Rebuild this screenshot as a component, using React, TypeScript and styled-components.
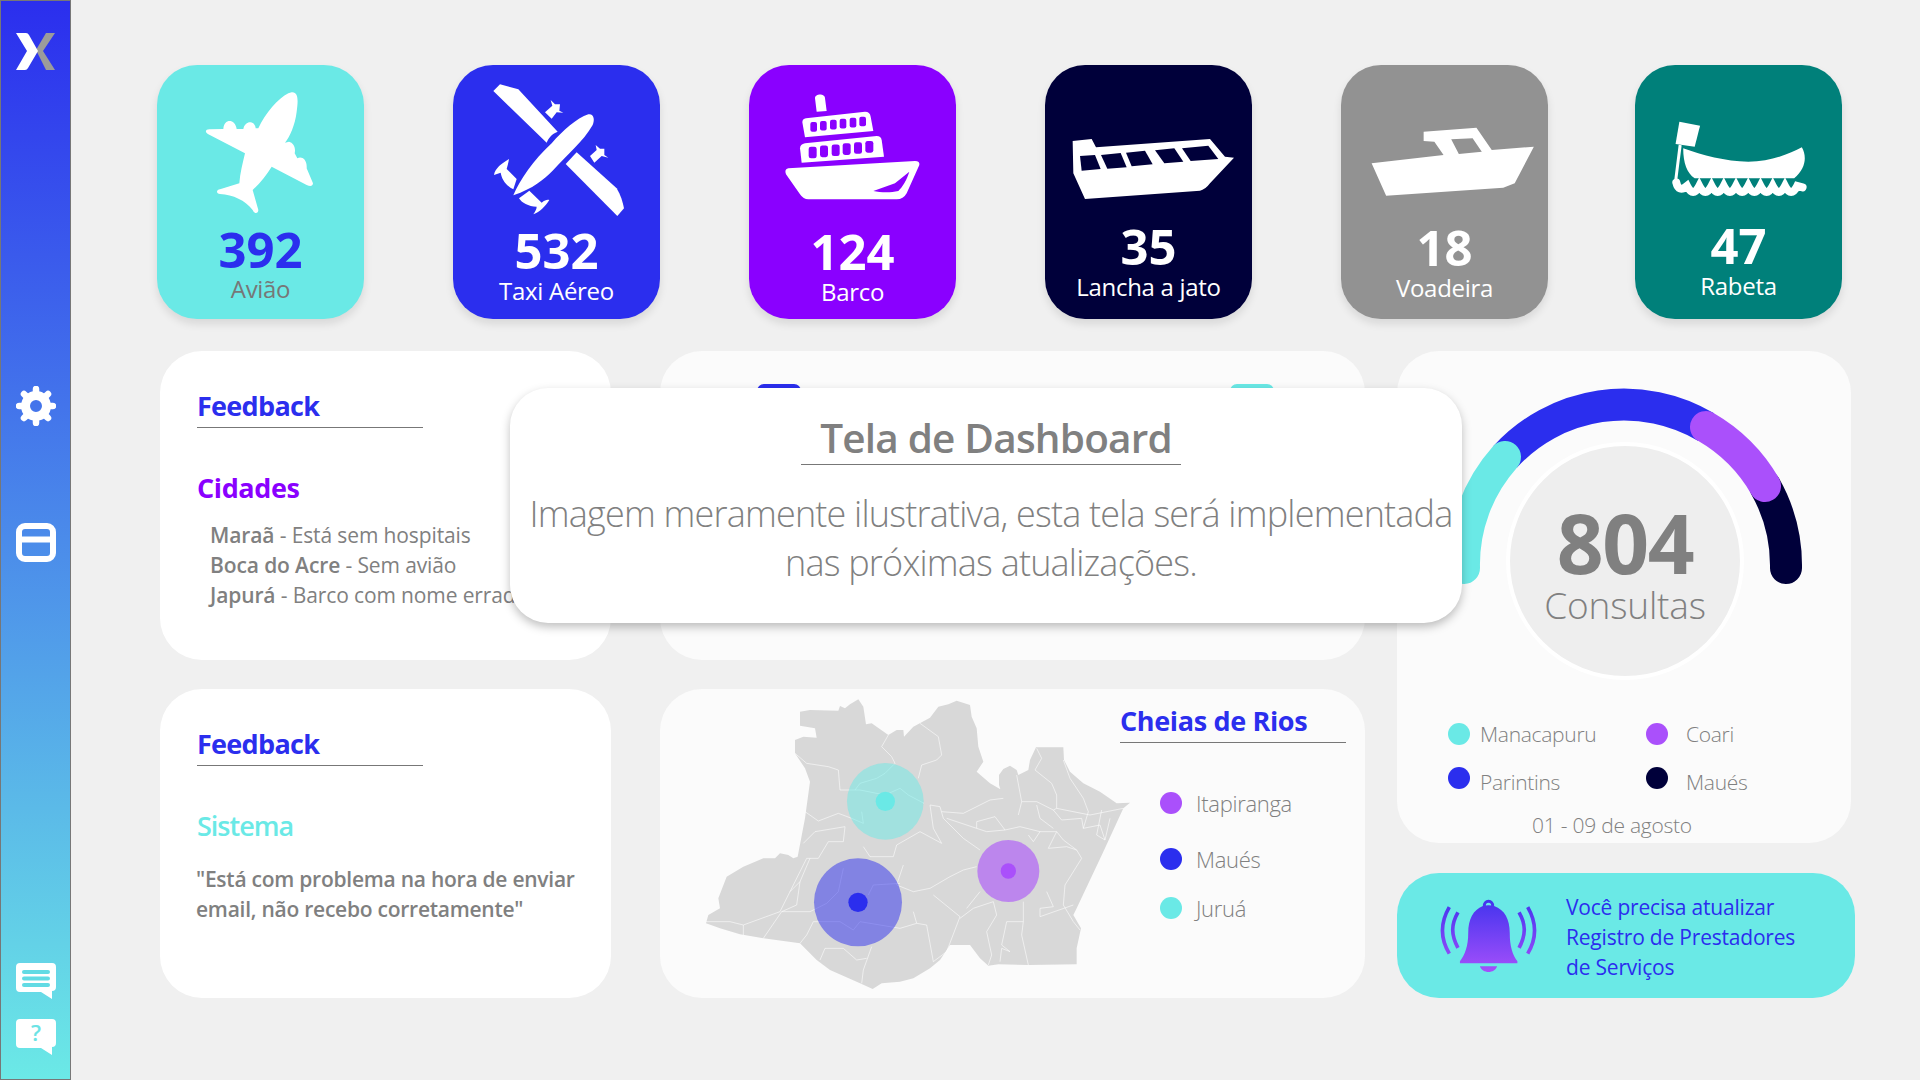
import styled, { createGlobalStyle } from 'styled-components'

const teal = '#6ae9e6'
const blue = '#2b2eee'
const violet = '#aa50fb'
const purple = '#8a00ff'
const navy = '#00003a'
const gray = '#808080'

const GlobalStyle = createGlobalStyle`
 html, body {
  margin: 0;
  padding: 0;
  background: #f0f0f0;
  font-family: "Open Sans", "Noto Sans", sans-serif;
 }
 * { box-sizing: border-box; }
`

const Page = styled.div`
 position: relative;
 display: flex;
 width: 1920px;
 height: 1080px;
 overflow: hidden;
 background: #f0f0f0;
`

const Sidebar = styled.aside`
 width: 71px;
 height: 1080px;
 flex-shrink: 0;
 display: flex;
 flex-direction: column;
 align-items: center;
 padding: 31px 0 21px;
 border: 1px solid #777;
 background: linear-gradient(180deg, #2b2eee 0%, #6be9e6 100%);
`

const SideIcon = styled.svg<{ $top?: number; $auto?: boolean }>`
 width: 40px;
 height: 40px;
 flex-shrink: 0;
 margin-top: ${p => (p.$auto ? 'auto' : `${p.$top ?? 0}px`)};
`

const Main = styled.main`
 flex: 1;
 padding: 65px 0 0 86px;
`

const TopRow = styled.section`
 display: flex;
 gap: 89px;
`

const StatCard = styled.div<{ $bg: string; $nudge?: number }>`
 width: 207px;
 height: 254px;
 flex-shrink: 0;
 margin-left: ${p => p.$nudge ?? 0}px;
 border-radius: 40px;
 background: ${p => p.$bg};
 box-shadow: 0 5px 8px rgba(0, 0, 0, 0.1);
 display: flex;
 flex-direction: column;
 align-items: center;
`

const StatIcon = styled.svg`
 width: 207px;
 height: 160px;
 flex-shrink: 0;
`

const StatNumber = styled.div<{ $top: number; $color?: string }>`
 margin-top: ${p => p.$top}px;
 font-size: 49px;
 line-height: 40px;
 font-weight: 700;
 color: ${p => p.$color ?? '#fff'};
`

const StatLabel = styled.div<{ $top: number; $color?: string }>`
 margin-top: ${p => p.$top}px;
 font-size: 24px;
 line-height: 24px;
 letter-spacing: -0.3px;
 color: ${p => p.$color ?? '#fff'};
`

const Board = styled.section`
 display: grid;
 grid-template-columns: 451px 705px 458px;
 column-gap: 49px;
 margin: 32px 0 0 3px;
`

const Column = styled.div<{ $gap: number; $shift?: number }>`
 display: flex;
 flex-direction: column;
 gap: ${p => p.$gap}px;
 margin-left: ${p => p.$shift ?? 0}px;
`

const Panel = styled.div<{ $soft?: boolean }>`
 height: 309px;
 border-radius: 42px;
 background: ${p => (p.$soft ? '#fbfbfb' : '#fff')};
`

const FeedbackPanel = styled(Panel)`
 padding: 32px 24px 0 37px;
`

const SectionTitle = styled.h2<{ $spacing: number }>`
 width: 226px;
 margin: 0;
 height: 45px;
 border-bottom: 1px solid #777;
 font-size: 27px;
 line-height: 46px;
 font-weight: 700;
 letter-spacing: ${p => p.$spacing}px;
 white-space: nowrap;
 color: ${blue};
`

const Topic = styled.h3<{ $color: string; $weight: number; $spacing: number }>`
 margin: 42px 0 0;
 font-size: 27px;
 line-height: 36px;
 font-weight: ${p => p.$weight};
 letter-spacing: ${p => p.$spacing}px;
 color: ${p => p.$color};
`

const IssueList = styled.div`
 margin: 14px 0 0 13px;
 white-space: nowrap;
 font-size: 21px;
 line-height: 30px;
 font-weight: 400;
 letter-spacing: -0.12px;
 color: ${gray};
 b { font-weight: 600; }
`

const Quote = styled.p`
 margin: 20px 0 0 -1px;
 width: 400px;
 font-size: 21px;
 line-height: 30px;
 font-weight: 600;
 letter-spacing: -0.25px;
 color: ${gray};
`

const BarsPanel = styled(Panel)`
 display: flex;
 justify-content: space-between;
 padding: 33px 91px 0 97px;
`

const BarTop = styled.div<{ $bg: string }>`
 width: 44px;
 height: 40px;
 border-radius: 7px 7px 0 0;
 background: ${p => p.$bg};
`

const MapPanel = styled(Panel)`
 display: flex;
`

const MapDrawing = styled.svg`
 width: 480px;
 height: 309px;
 flex-shrink: 0;
 margin-right: -20px;
`

const MapSide = styled.div`
 padding-top: 9px;
`

const MapLegend = styled.div`
 display: flex;
 flex-direction: column;
 margin: 0 0 0 40px;
`

const MapLegendItem = styled.div<{ $top: number }>`
 display: flex;
 align-items: center;
 gap: 14px;
 margin-top: ${p => p.$top}px;
 font-size: 22px;
 line-height: 28px;
 font-weight: 300;
 letter-spacing: -0.3px;
 color: ${gray};
`

const Dot = styled.span<{ $bg: string }>`
 width: 22px;
 height: 22px;
 flex-shrink: 0;
 border-radius: 50%;
 background: ${p => p.$bg};
`

const GaugePanel = styled.div`
 width: 454px;
 height: 492px;
 border-radius: 42px;
 background: #fbfbfb;
 padding: 29px 0 0 43px;
`

const GaugeWrap = styled.div`
 position: relative;
 width: 370px;
 height: 300px;
`

const GaugeArc = styled.svg`
 display: block;
 width: 370px;
 height: 210px;
`

const GaugeCircle = styled.div`
 position: absolute;
 left: 66px;
 top: 62px;
 width: 238px;
 height: 238px;
 border: 4px solid #fff;
 border-radius: 50%;
 background: #eee;
 display: flex;
 flex-direction: column;
 align-items: center;
 color: ${gray};
`

const GaugeValue = styled.div`
 margin-top: 57px;
 font-size: 82px;
 line-height: 78px;
 font-weight: 700;
 letter-spacing: -1.4px;
`

const GaugeLabel = styled.div`
 margin-top: 2px;
 font-size: 37px;
 line-height: 44px;
 font-weight: 300;
 letter-spacing: -0.2px;
`

const GaugeLegend = styled.div`
 display: grid;
 grid-template-columns: 198px 198px;
 grid-auto-rows: 44px;
 margin: 32px 0 0 8px;
`

const GaugeLegendItem = styled.div<{ $gap: number; $drop?: number }>`
 display: flex;
 align-items: center;
 gap: ${p => p.$gap}px;
 font-size: 21px;
 font-weight: 300;
 letter-spacing: -0.3px;
 color: ${gray};
 span:last-child { position: relative; top: ${p => p.$drop ?? 0}px; }
`

const DateRange = styled.div`
 margin: 10px 0 0 -43px;
 padding-right: 24px;
 text-align: center;
 font-size: 21px;
 line-height: 30px;
 font-weight: 300;
 letter-spacing: -0.25px;
 color: ${gray};
`

const AlertBanner = styled.div`
 width: 458px;
 height: 125px;
 border-radius: 42px;
 background: ${teal};
 display: flex;
 align-items: center;
 gap: 28px;
 padding-left: 43px;
`

const BellIcon = styled.svg`
 width: 98px;
 height: 75px;
 flex-shrink: 0;
`

const AlertText = styled.p`
 margin: 3px 0 0;
 width: 250px;
 font-size: 21px;
 line-height: 30px;
 letter-spacing: -0.2px;
 color: ${blue};
`

const Notice = styled.div`
 position: absolute;
 left: 510px;
 top: 388px;
 width: 952px;
 height: 235px;
 border-radius: 38px;
 background: #fff;
 box-shadow: 0 4px 10px rgba(0, 0, 0, 0.25);
 padding: 20px 0 0 10px;
 text-align: center;
 color: ${gray};
`

const NoticeTitle = styled.h1`
 margin: 0 auto;
 width: 380px;
 height: 57px;
 border-bottom: 1px solid #777;
 padding-left: 10px;
 font-size: 40.5px;
 line-height: 60px;
 font-weight: 600;
 letter-spacing: -0.8px;
 white-space: nowrap;
`

const NoticeText = styled.p`
 margin: 24px 0 0;
 font-size: 36px;
 line-height: 49px;
 font-weight: 300;
 letter-spacing: -0.8px;
 white-space: nowrap;
`

const gearTeeth = [0, 45, 90, 135, 180, 225, 270, 315]

const Gear = () => (
  <SideIcon $top={314} viewBox="0 0 40 40">
    <circle cx="20" cy="20" r="10.5" fill="none" stroke="#fff" strokeWidth="9" />
    {gearTeeth.map(a => (
      <line key={a} x1="20" y1="5" x2="20" y2="3" stroke="#fff" strokeWidth="6.5" strokeLinecap="round" transform={`rotate(${a} 20 20)`} />
    ))}
  </SideIcon>
)

const PlaneIcon = () => (
  <StatIcon viewBox="-99 -15 621 480">
    <path fill="#fff" d="M305,67 C325,65 325,90 320,125 C315,165 300,200 285,218 L297,215 C310,218 318,232 314,250 L322,265 C335,258 352,268 350,295 L369,340 C368,350 360,350 350,345 L245,290 C230,315 210,340 188,360 L205,420 C205,432 192,432 188,420 C165,390 130,375 90,372 C78,370 78,360 90,358 L148,340 C150,310 158,280 165,250 L55,193 C42,185 48,177 60,178 L100,177 C102,145 135,145 140,177 L160,177 C165,150 195,150 197,175 L205,175 C225,130 265,85 295,70 Z" />
  </StatIcon>
)

const TaxiIcon = () => (
  <StatIcon viewBox="789 -15 621 480">
    <g fill="#fff">
      <path d="M930,43 L985,58 L1103,185 C1085,192 1075,205 1070,218 L910,63 Z" />
      <path d="M1195,133 C1212,130 1215,150 1208,165 C1180,215 1130,255 1090,300 C1060,330 1030,355 970,376 C990,330 1030,270 1085,220 C1120,180 1160,145 1195,133 Z" />
      <path d="M1160,247 L1280,355 C1292,375 1298,395 1302,415 L1282,438 L1127,282 Z" />
      <path d="M1065,127 L1087,107 L1082,90 L1095,103 L1110,103 L1108,122 L1120,128 L1100,127 L1085,146 Z" />
      <path d="M1200,258 L1220,240 L1217,225 L1230,236 L1243,236 L1243,255 L1255,263 L1235,258 L1213,278 Z" />
      <path d="M912,315 C915,295 935,280 957,267 C955,280 952,290 950,297 L980,327 L970,358 C945,345 935,325 932,308 Z" />
      <path d="M1018,362 L1055,398 C1065,390 1072,388 1078,390 C1065,410 1050,425 1030,433 C1035,425 1040,418 1040,410 C1015,410 995,398 987,385 Z" />
    </g>
  </StatIcon>
)

const upperWindows = [121, 150, 180, 209, 239, 268]
const lowerWindows = [116, 150, 185, 218, 252, 286]

const ShipIcon = () => (
  <StatIcon viewBox="-63 -60 621 480">
    <g fill="#fff">
      <path d="M135,40 C135,25 165,25 165,40 L170,78 L140,80 Z" />
      <path d="M108,100 L285,80 Q300,80 302,95 L310,138 L105,157 L97,112 Q97,102 108,100 Z" />
      <path d="M105,175 L320,153 Q333,153 335,165 L342,215 L95,233 L90,190 Q90,178 105,175 Z" />
      <path d="M55,250 L435,228 Q450,228 448,240 L410,325 Q400,343 380,343 L115,343 Q100,343 90,328 L48,268 Q42,253 55,250 Z" />
    </g>
    <g fill={purple}>
      {upperWindows.map((x, i) => <rect key={x} x={x} y={111 - i * 3.2} width="20" height="29" rx="6" />)}
      {lowerWindows.map((x, i) => <rect key={x} x={x} y={185 - i * 3.4} width="24" height="35" rx="7" />)}
      <path d="M310,318 L375,295 L418,260 C410,285 398,305 385,318 C360,324 330,322 310,318 Z" />
    </g>
  </StatIcon>
)

const JetIcon = () => (
  <StatIcon viewBox="825 -60 621 480">
    <path fill="#fff" d="M908,168 L965,162 L978,187 L1320,162 L1365,215 L1392,218 L1320,295 Q1305,315 1290,317 L945,342 L910,265 Z" />
    <g fill={navy}>
      <path d="M930,213 L975,210 L992,252 L935,257 Z" />
      <path d="M993,210 L1052,204 L1070,247 L1012,251 Z" />
      <path d="M1068,203 L1125,197 L1148,238 L1085,244 Z" />
      <path d="M1155,196 L1213,190 L1240,230 L1183,235 Z" />
      <path d="M1236,190 L1315,182 L1345,222 L1262,228 Z" />
    </g>
  </StatIcon>
)

const SpeedboatIcon = () => (
  <StatIcon viewBox="838 75 270.5 480" preserveAspectRatio="none">
    <path fill="#fff" fillRule="evenodd" d="M946,275 L1015,263 L1035,330 L1090,320 L1065,430 L1050,443 L897,467 L878,370 L972,345 L960,305 L946,303 Z M982,298 L1010,295 L1022,335 L992,342 Z" />
  </StatIcon>
)

const RabetaIcon = () => (
  <StatIcon viewBox="1222 75 270.5 480" preserveAspectRatio="none">
    <path fill="#fff" d="M1280,245 L1307,257 L1300,320 L1275,312 Z" />
    <path fill="#fff" d="M1285,325 C1310,345 1340,365 1370,365 C1400,365 1425,340 1440,322 C1447,350 1445,385 1430,415 L1300,415 C1290,400 1285,370 1285,325 Z" />
    <path fill="none" stroke="#fff" strokeWidth="3" vectorEffect="non-scaling-stroke" d="M1281,315 L1275,425" />
    <path fill="none" stroke="#fff" strokeWidth="8" strokeLinecap="round" vectorEffect="non-scaling-stroke" d="M1276,428 q3,30 14,10 q8,36 16,0 q8,36 16,0 q8,36 16,0 q8,36 16,0 q8,36 16,0 q8,36 16,0 q8,36 16,0 q8,36 16,0 q8,36 16,0 L1441,442" />
  </StatIcon>
)

const mapOutline = 'M300,50 L330,45 L415,47 L420,33 L435,40 L450,28 L475,13 L490,35 L498,88 L515,85 L565,120 L590,105 L610,105 L612,125 L640,95 L690,68 L715,35 L745,28 L770,17 L810,30 L815,65 L830,100 L835,155 L850,200 L830,230 L870,265 L905,285 L910,310 L897,270 L897,240 L910,222 L930,212 L950,225 L955,240 L985,225 L990,195 L1008,157 L1090,157 L1092,195 L1110,230 L1150,265 L1200,290 L1250,325 L1290,323 L1270,340 L1210,470 L1130,640 L1120,660 L1143,700 L1130,760 L1130,808 L985,810 L895,808 L865,812 L840,790 L810,750 L750,750 L720,795 L690,820 L640,850 L600,860 L545,865 L518,882 L480,865 L390,825 L350,795 L300,745 L190,730 L120,718 L60,700 L18,685 L25,660 L60,640 L55,610 L80,545 L130,515 L190,490 L225,490 L240,475 L265,480 L280,490 L293,485 L315,370 L330,260 L315,220 L285,175 L285,135 L310,125 L350,128 L345,100 L300,92 Z'

const mapBorders = [
  '285,175 320,205 385,215 415,225 420,285 480,285 555,300 600,280 625,300 672,325',
  '565,120 545,155 575,185 585,205 555,235 530,250 480,265 465,285',
  '660,85 715,125 725,180 710,195 665,210 655,250',
  '315,350 355,378 415,355 455,370 490,385 485,350',
  '310,445 345,410 435,395 430,440 385,440 355,490 320,490 270,590 240,650 130,690 130,720',
  '18,680 90,680 130,690',
  '490,455 510,485 580,485 590,450 660,410 725,445 700,400 690,330 720,335 730,370 790,430 840,465',
  '610,510 590,570 640,590 690,580 750,545 790,525 830,515',
  '725,350 790,355 870,315 910,310',
  '740,370 830,400 830,380 885,365 915,405 960,395 1020,410 1070,410 1090,435 1130,465 1145,490 1095,570 1090,630 1120,680 1140,705',
  '955,360 965,320 1010,320 1060,345 1070,340 1170,360 1270,340',
  '1010,160 1025,190 1005,225 1055,265 1070,300 1070,340',
  '1090,195 1110,250 1150,310 1165,350 1150,400 1200,390 1215,435 1230,370',
  '950,240 965,320',
  '700,600 780,665 740,770 700,800 680,690 650,685 640,650',
  '650,685 600,700 480,680 460,705 420,680 340,680 320,720 300,745',
  '380,625 330,650 245,650 190,730',
  '430,520 415,590 380,625',
  '600,565 520,570 505,600',
  '515,755 490,825 485,865',
  '360,795 375,760 430,760 470,795 500,790',
  '970,620 970,680 920,680 905,750 930,770 905,760 900,800',
  '970,680 965,720 985,810',
  '1120,630 1020,665 1020,640 1060,635 1040,590',
  '880,620 820,640 780,670',
  '880,620 890,660 860,710 875,780 865,810',
  '800,640 840,590',
  '1010,330 1020,370 1060,400',
  '1205,345 1190,420 1215,435',
  '1060,345 1085,375 1145,370 1150,400',
  '1020,410 1000,440 985,420',
  '1070,410 1045,460 1100,455 1130,465',
  '830,400 860,410 915,405',
  '300,560 330,490 ',
  '270,590 300,560 290,630 245,650',
]

const StateMap = () => (
  <MapDrawing viewBox="-120 -18 1440 927">
    <path d={mapOutline} fill="#d8d8d8" />
    {mapBorders.map(points => (
      <polyline key={points} points={points} fill="none" stroke="#fff" strokeWidth="2" strokeOpacity="0.85" />
    ))}
    <circle cx="556" cy="319" r="115" fill={teal} fillOpacity="0.5" />
    <circle cx="556" cy="319" r="29" fill={teal} />
    <circle cx="474" cy="622" r="132" fill={blue} fillOpacity="0.5" />
    <circle cx="474" cy="622" r="29" fill={blue} />
    <circle cx="925" cy="528" r="93" fill={violet} fillOpacity="0.6" />
    <circle cx="925" cy="528" r="23" fill={violet} />
  </MapDrawing>
)

const Gauge = () => (
  <GaugeArc viewBox="1440 380 370 210">
    <g fill="none" strokeWidth="32">
      <path d="M1765,486 A161,161 0 0 1 1786,568" stroke={navy} strokeLinecap="round" />
      <path d="M1505,457 A161,161 0 0 1 1706,427" stroke={blue} />
      <path d="M1706,427 A161,161 0 0 1 1765,486" stroke={violet} strokeLinecap="round" />
      <path d="M1464,568 A161,161 0 0 1 1505,457" stroke={teal} strokeLinecap="round" />
    </g>
  </GaugeArc>
)

const AlarmBell = () => (
  <BellIcon viewBox="150 655 295 225">
    <defs>
      <linearGradient id="bellFill" gradientUnits="userSpaceOnUse" x1="0" y1="660" x2="0" y2="880">
        <stop offset="0" stopColor="#4334ee" />
        <stop offset="1" stopColor="#a650fb" />
      </linearGradient>
    </defs>
    <g fill="url(#bellFill)">
      <path fillRule="evenodd" d="M296,660 a17,17 0 0 1 17,19 C345,690 360,720 360,760 C360,800 368,825 383,845 L383,851 L210,851 L210,845 C225,825 235,800 235,760 C235,720 250,690 279,679 A17,17 0 0 1 296,660 Z M296,669 a8,8 0 0 0 -8,8 a40,40 0 0 1 16,0 a8,8 0 0 0 -8,-8 Z" />
      <path d="M270,860 H322 C315,883 277,883 270,860 Z" />
    </g>
    <g fill="none" stroke="url(#bellFill)" strokeWidth="11">
      <path d="M178,682 C150,730 150,775 178,822" />
      <path d="M204,698 C183,735 183,765 204,805" />
      <path d="M414,682 C442,730 442,775 414,822" />
      <path d="M388,698 C409,735 409,765 388,805" />
    </g>
  </BellIcon>
)

export default function App() {
  return (
    <Page>
      <GlobalStyle />
      <Sidebar>
        <SideIcon viewBox="0 0 40 40">
          <path fill="#9b9b9b" d="M39,1 H30 L20,18 L30,38 H39 L27,19 Z" />
          <path fill="#fff" d="M0,1 H10 Q12,1 13,3 L22,19 L12,36 Q11,38 9,38 H0 L11,19 Z" />
        </SideIcon>
        <Gear />
        <SideIcon $top={97} viewBox="0 0 40 40">
          <rect x="3" y="3" width="34" height="33" rx="6" fill="none" stroke="#fff" strokeWidth="6" />
          <line x1="3" y1="16.5" x2="37" y2="16.5" stroke="#fff" strokeWidth="6" />
        </SideIcon>
        <SideIcon $auto viewBox="0 0 40 40">
          <path fill="#fff" d="M4,2 H36 Q40,2 40,6 V26 Q40,30 36,30 V38 L25,31 H4 Q0,31 0,27 V6 Q0,2 4,2 Z" />
          <g fill="#62dbe4">
            <rect x="6" y="9" width="28" height="4" rx="2" />
            <rect x="6" y="15.5" width="28" height="4" rx="2" />
            <rect x="6" y="22" width="28" height="4" rx="2" />
          </g>
        </SideIcon>
        <SideIcon $top={17} viewBox="0 0 40 40">
          <path fill="#fff" d="M4,1 H36 Q40,1 40,5 V25 Q40,29 36,29 V37 L25,30 H4 Q0,30 0,26 V5 Q0,1 4,1 Z" />
          <text x="20" y="23" textAnchor="middle" fontFamily="Open Sans, sans-serif" fontSize="22" fontWeight="600" fill="#6ce3e5">?</text>
        </SideIcon>
      </Sidebar>
      <Main>
        <TopRow>
          <StatCard $bg={teal}>
            <PlaneIcon />
            <StatNumber $top={4} $color={blue}>392</StatNumber>
            <StatLabel $top={8} $color="#777">Avião</StatLabel>
          </StatCard>
          <StatCard $bg={blue}>
            <TaxiIcon />
            <StatNumber $top={5}>532</StatNumber>
            <StatLabel $top={9}>Taxi Aéreo</StatLabel>
          </StatCard>
          <StatCard $bg={purple}>
            <ShipIcon />
            <StatNumber $top={6}>124</StatNumber>
            <StatLabel $top={9}>Barco</StatLabel>
          </StatCard>
          <StatCard $bg={navy}>
            <JetIcon />
            <StatNumber $top={1}>35</StatNumber>
            <StatLabel $top={9}>Lancha a jato</StatLabel>
          </StatCard>
          <StatCard $bg="#929292">
            <SpeedboatIcon />
            <StatNumber $top={2}>18</StatNumber>
            <StatLabel $top={9}>Voadeira</StatLabel>
          </StatCard>
          <StatCard $bg="#00807a" $nudge={-2}>
            <RabetaIcon />
            <StatNumber $top={0}>47</StatNumber>
            <StatLabel $top={9}>Rabeta</StatLabel>
          </StatCard>
        </TopRow>
        <Board>
          <Column $gap={29}>
            <FeedbackPanel>
              <SectionTitle $spacing={-0.7}>Feedback</SectionTitle>
              <Topic $color={purple} $weight={700} $spacing={-0.4}>Cidades</Topic>
              <IssueList>
                <div><b>Maraã</b> - Está sem hospitais</div>
                <div><b>Boca do Acre</b> - Sem avião</div>
                <div><b>Japurá</b> - Barco com nome errado</div>
              </IssueList>
            </FeedbackPanel>
            <FeedbackPanel>
              <SectionTitle $spacing={-0.7}>Feedback</SectionTitle>
              <Topic $color={teal} $weight={600} $spacing={-1}>Sistema</Topic>
              <Quote>"Está com problema na hora de enviar email, não recebo corretamente"</Quote>
            </FeedbackPanel>
          </Column>
          <Column $gap={29}>
            <BarsPanel $soft>
              <BarTop $bg={blue} />
              <BarTop $bg={teal} />
            </BarsPanel>
            <MapPanel $soft>
              <StateMap />
              <MapSide>
                <SectionTitle $spacing={-0.35}>Cheias de Rios</SectionTitle>
                <MapLegend>
                  <MapLegendItem $top={46}><Dot $bg={violet} />Itapiranga</MapLegendItem>
                  <MapLegendItem $top={28}><Dot $bg={blue} />Maués</MapLegendItem>
                  <MapLegendItem $top={21}><Dot $bg={teal} />Juruá</MapLegendItem>
                </MapLegend>
              </MapSide>
            </MapPanel>
          </Column>
          <Column $gap={30} $shift={-17}>
            <GaugePanel>
              <GaugeWrap>
                <Gauge />
                <GaugeCircle>
                  <GaugeValue>804</GaugeValue>
                  <GaugeLabel>Consultas</GaugeLabel>
                </GaugeCircle>
              </GaugeWrap>
              <GaugeLegend>
                <GaugeLegendItem $gap={10}><Dot $bg={teal} /><span>Manacapuru</span></GaugeLegendItem>
                <GaugeLegendItem $gap={18}><Dot $bg={violet} /><span>Coari</span></GaugeLegendItem>
                <GaugeLegendItem $gap={10} $drop={4}><Dot $bg={blue} /><span>Parintins</span></GaugeLegendItem>
                <GaugeLegendItem $gap={18} $drop={4}><Dot $bg={navy} /><span>Maués</span></GaugeLegendItem>
              </GaugeLegend>
              <DateRange>01 - 09 de agosto</DateRange>
            </GaugePanel>
            <AlertBanner>
              <AlarmBell />
              <AlertText>Você precisa atualizar Registro de Prestadores de Serviços</AlertText>
            </AlertBanner>
          </Column>
        </Board>
      </Main>
      <Notice>
        <NoticeTitle>Tela de Dashboard</NoticeTitle>
        <NoticeText>
          Imagem meramente ilustrativa, esta tela será implementada
          <br />
          nas próximas atualizações.
        </NoticeText>
      </Notice>
    </Page>
  )
}
